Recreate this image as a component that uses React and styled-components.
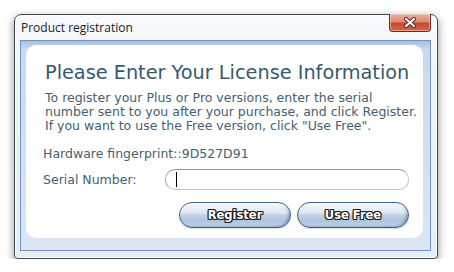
import styled, { createGlobalStyle } from "styled-components"

const GlobalStyle = createGlobalStyle`
    body {
        margin: 0;
        background: #ffffff;
    }
`

const Page = styled.div`
    padding: 14px 0 0 14px;
`

const Window = styled.div`
    width: 424px;
    height: 245px;
    box-sizing: border-box;
    border: 1px solid #3a4a55;
    border-radius: 7px 7px 4px 4px;
    background: linear-gradient(to bottom, #f7f9fc 0%, #eef3f8 40%, #e6edf5 100%);
    box-shadow: 0 3px 9px rgba(0, 0, 0, 0.45), inset 0 0 0 1px rgba(255, 255, 255, 0.85);
    padding: 0 6px 7px 5px;
    display: flex;
    flex-direction: column;
`

const TitleBar = styled.div`
    height: 25px;
    display: flex;
    flex-direction: row;
    justify-content: space-between;
    align-items: flex-start;
    flex-shrink: 0;
`

const Title = styled.span`
    margin: 6px 0 0 1px;
    font-family: "Open Sans", "Liberation Sans", sans-serif;
    font-size: 12px;
    line-height: 14px;
    color: #1b1b1b;
`

const CloseButton = styled.div`
    width: 42px;
    height: 18px;
    margin-top: -1px;
    box-sizing: border-box;
    border: 1px solid #6e2a22;
    border-top: none;
    border-radius: 0 0 4px 4px;
    background: linear-gradient(to bottom, #eab3a6 0%, #dc8872 45%, #c74a30 55%, #d2664a 100%);
    box-shadow: inset 0 0 0 1px rgba(255, 220, 210, 0.5);
    display: flex;
    justify-content: center;
    align-items: center;
`

const Client = styled.div`
    flex: 1;
    min-width: 0;
    display: flex;
    border: 1px solid #7593bd;
    background: linear-gradient(to bottom, #a7bfe2 0%, #c9d9ef 8px, #dbe6f4 100%);
    padding: 4px 7px 12px 5px;
`

const Panel = styled.div`
    flex: 1;
    min-width: 0;
    background: #ffffff;
    border-radius: 10px;
    padding: 14px 14px 0 17px;
    display: flex;
    flex-direction: column;
    font-family: "DejaVu Sans", Verdana, sans-serif;
    color: #46606f;
`

const Heading = styled.h1`
    margin: 3px 0 0 2px;
    font-size: 19.3px;
    line-height: 22px;
    font-weight: normal;
    color: #37596c;
    white-space: nowrap;
`

const Intro = styled.p`
    margin: 7px 0 0 2px;
    font-size: 12.5px;
    line-height: 14px;
    white-space: nowrap;
`

const Fingerprint = styled.div`
    margin-top: 14px;
    font-size: 12.5px;
    line-height: 14px;
`

const Row = styled.div`
    margin-top: 8px;
    display: flex;
    flex-direction: row;
    align-items: center;
`

const Label = styled.span`
    width: 122px;
    font-size: 12.5px;
    line-height: 14px;
`

const SerialField = styled.div`
    width: 245px;
    height: 21px;
    box-sizing: border-box;
    border: 1px solid #c4c4c4;
    border-top-color: #9a9a9a;
    border-left-color: #adadad;
    border-radius: 10px;
    background: #ffffff;
    padding-left: 10px;
    display: flex;
    align-items: center;
`

const Caret = styled.span`
    width: 1px;
    height: 15px;
    background: #000000;
`

const Buttons = styled.div`
    margin-top: 12px;
    display: flex;
    flex-direction: row;
    justify-content: flex-end;
    gap: 6px;
`

const Button = styled.button`
    width: 112px;
    height: 26px;
    box-sizing: border-box;
    border: 1px solid #3e5e85;
    border-radius: 13px;
    background: linear-gradient(to bottom, #f3f7fb 0%, #dde8f3 40%, #bdd0e6 52%, #aec4de 75%, #c3d5ea 100%);
    box-shadow: inset 0 1px 0 #ffffff, inset -2px -1px 2px rgba(60, 90, 130, 0.35), 0 1px 1px rgba(0, 0, 0, 0.15);
    font-family: "DejaVu Sans", Verdana, sans-serif;
    font-weight: bold;
    font-size: 11.5px;
    color: #ffffff;
    text-shadow: 1px 0 #1e1e1e, -1px 0 #1e1e1e, 0 1px #1e1e1e, 0 -1px #1e1e1e,
        1px 1px #1e1e1e, -1px -1px #1e1e1e, 1px -1px #1e1e1e, -1px 1px #1e1e1e;
    padding: 0;
    cursor: pointer;
`

function CloseGlyph() {
    return (
        <svg width="14" height="11" viewBox="0 0 14 11">
            <path d="M3 2 L11 9 M11 2 L3 9" stroke="#5a1f18" strokeWidth="4" strokeLinecap="round" />
            <path d="M3 2 L11 9 M11 2 L3 9" stroke="#ffffff" strokeWidth="2.2" strokeLinecap="round" />
        </svg>
    )
}

export default function App() {
    return (
        <Page>
            <GlobalStyle />
            <Window>
                <TitleBar>
                    <Title>Product registration</Title>
                    <CloseButton>
                        <CloseGlyph />
                    </CloseButton>
                </TitleBar>
                <Client>
                    <Panel>
                        <Heading>Please Enter Your License Information</Heading>
                        <Intro>
                            To register your Plus or Pro versions, enter the serial<br />
                            number sent to you after your purchase, and click Register.<br />
                            If you want to use the Free version, click "Use Free".
                        </Intro>
                        <Fingerprint>Hardware fingerprint::9D527D91</Fingerprint>
                        <Row>
                            <Label>Serial Number:</Label>
                            <SerialField>
                                <Caret />
                            </SerialField>
                        </Row>
                        <Buttons>
                            <Button>Register</Button>
                            <Button>Use Free</Button>
                        </Buttons>
                    </Panel>
                </Client>
            </Window>
        </Page>
    )
}
